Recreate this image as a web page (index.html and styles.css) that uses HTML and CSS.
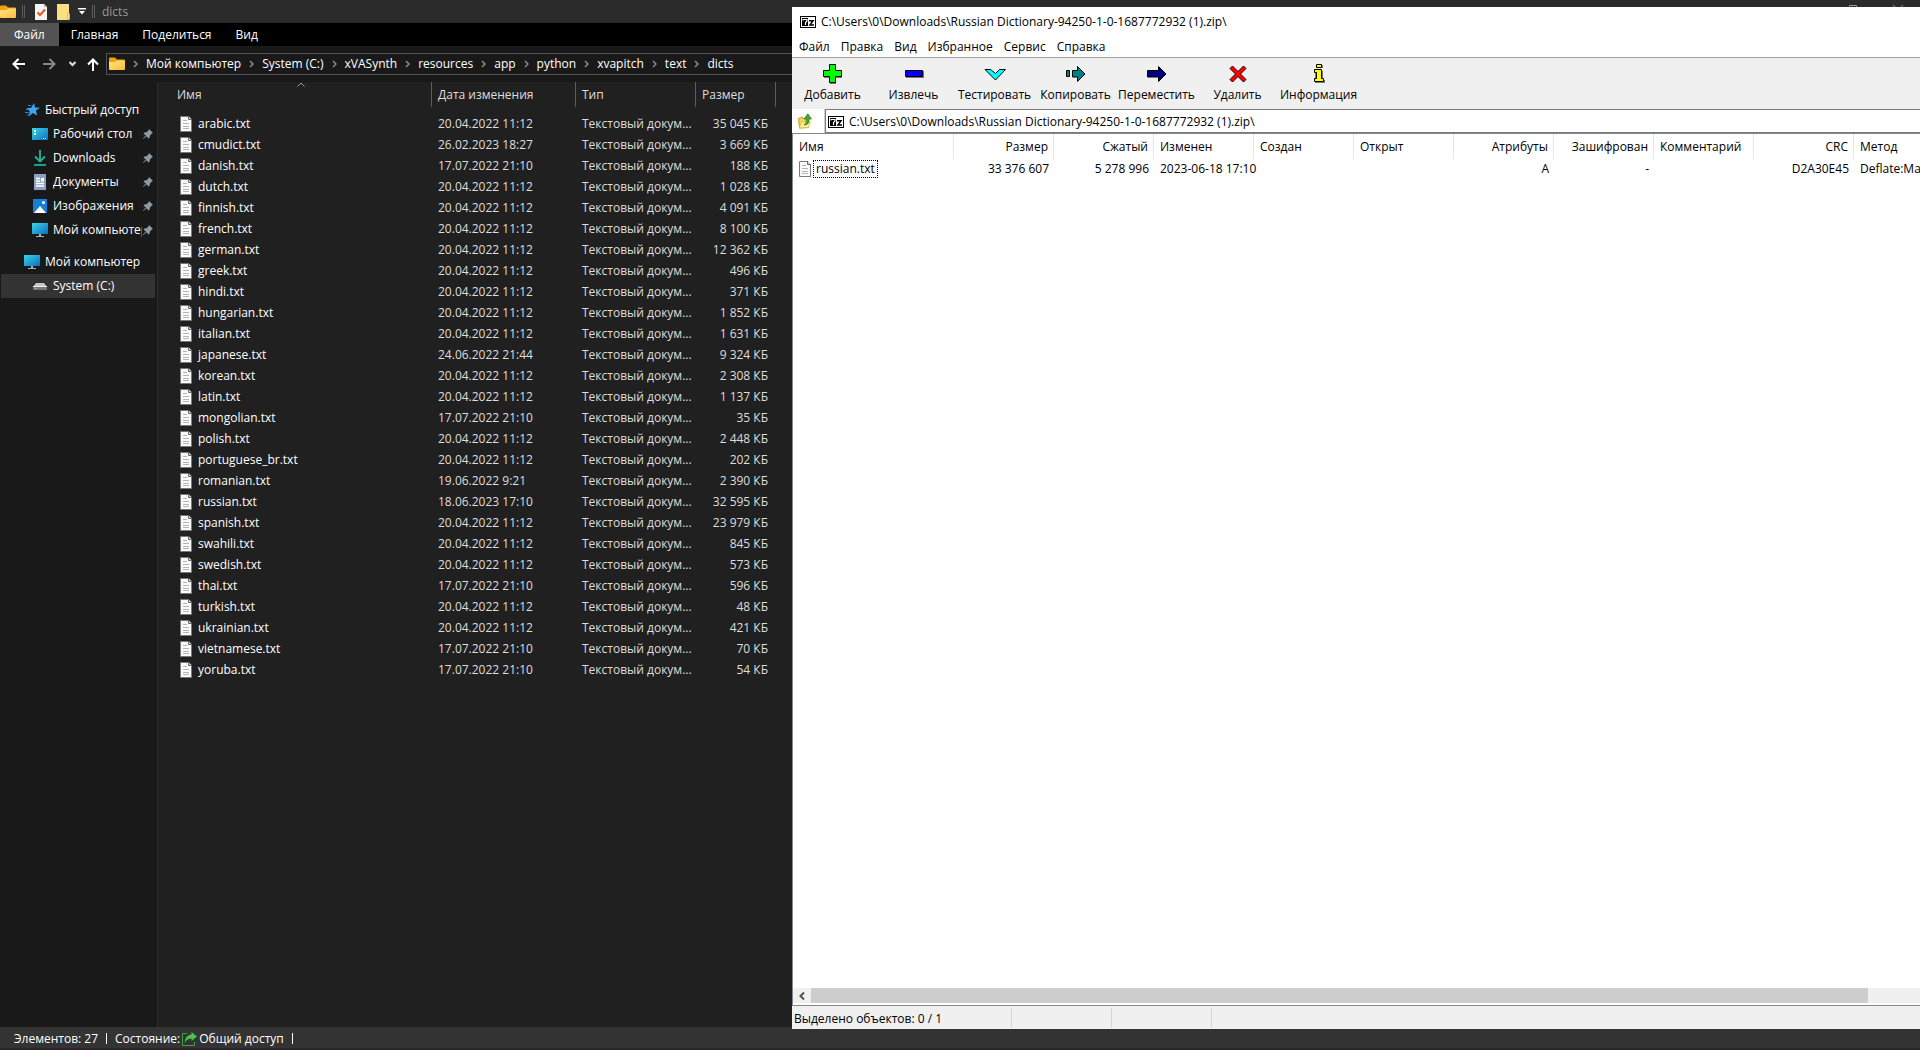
FILE: index.html
```html
<!DOCTYPE html>
<html lang="ru">
  <head>
    <meta charset="UTF-8" />
    <meta name="viewport" content="width=device-width, initial-scale=1.0" />
    <title>dicts</title>
    <link rel="stylesheet" href="styles.css">
  </head>
  <body>
    <!-- Shared icons -->
    <svg class="defs" aria-hidden="true">
      <linearGradient id="gold" x1="0" y1="0" x2="1" y2="1">
        <stop offset="0" stop-color="#ffe48a" />
        <stop offset="1" stop-color="#fcbf33" />
      </linearGradient>
      <linearGradient id="screen" x1="0" y1="0" x2="1" y2="1">
        <stop offset="0" stop-color="#3ad3e6" />
        <stop offset="1" stop-color="#0b6fc4" />
      </linearGradient>
      <symbol id="folder" viewBox="0 0 16 14">
        <path d="M0 1.500Q0 .5 1 .5h5l2 2h7q1 0 1 1V8H0z" fill="#f0a30c" />
        <path d="M0 5h6l2-1.500h8V12q0 1-1 1H1q-1 0-1-1z" fill="url(#gold)" />
      </symbol>
      <symbol id="txt" viewBox="0 0 12 16">
        <path d="M.5.5h8l3 3v12H.5z" fill="#fafafa" stroke="#77797b" />
        <path d="M8.500 0v3.500H12" fill="#ccc" stroke="#66686a" />
        <path d="M3 4.500h4M3 7.500h6M3 10.500h6M3 12.500h6" stroke="#b4b4b4" />
      </symbol>
      <symbol id="pin" viewBox="0 0 10 10">
        <path d="M6 0l4 4-1.200.6-2 2.200-.2 2L5.600 9.600 3.400 7.200.4 10 0 9.600 2.800 6.600.6 4.400l.8-1 2.200-.2L5.600 1.200z" fill="#8f9aa3" />
      </symbol>
      <symbol id="monitor" viewBox="0 0 16 16">
        <path d="M0 1h16v11H0z" fill="url(#screen)" />
        <path d="M7 12h2v2h3v1H4v-1h3z" fill="#a9b4bb" />
      </symbol>
      <symbol id="chevron" viewBox="0 0 5 8">
        <path d="M1 1l3 3-3 3" fill="none" stroke="#8c8c8c" stroke-width="1.500" />
      </symbol>
      <symbol id="sevenzip" viewBox="0 0 16 12">
        <path d="M0 0h16v12H0z" fill="#000" />
        <path d="M1 1h14v10H1z" fill="#fff" />
        <path d="M2 2h6v8H2z" fill="#000" />
        <path d="M3 4.500V3.500h4V5L5.500 6.500V9" fill="none" stroke="#fff" stroke-width="1.200" />
        <path d="M9 4.700h4L10 9h4" fill="none" stroke="#000" stroke-width="1.500" />
      </symbol>
    </svg>

    <div class="explorer">
      <header class="title-bar">
        <svg width="16" height="14"><use href="#folder" /></svg>
        <span class="grip"></span>
        <button class="quick quick-props" aria-label="Свойства">
          <svg width="12" height="16" viewBox="0 0 12 16">
            <path d="M0 0h9l3 3v13H0z" fill="#f4f4f4" />
            <path d="M9 0v3h3z" fill="#b0b0b0" />
            <path d="M2.500 8.500L5 11l5-5.500" fill="none" stroke="#e8552a" stroke-width="2" />
          </svg>
        </button>
        <button class="quick quick-new" aria-label="Новая папка">
          <svg width="13" height="16" viewBox="0 0 13 16">
            <path d="M0 0h12v16H0z" fill="#fbdf83" />
            <path d="M10.500 9.500h2v6h-2z" fill="#fdeaa8" stroke="#dcb343" stroke-width=".8" />
          </svg>
        </button>
        <button class="quick quick-menu" aria-label="Настройка панели">
          <svg width="8" height="7" viewBox="0 0 8 7"><path d="M0 0h8v1.500H0zM1 3h6L4 6.500z" fill="#fff" /></svg>
        </button>
        <span class="grip"></span>
        <span class="window-title">dicts</span>
        <div class="window-controls">
          <button aria-label="Свернуть"><svg width="10" height="10"><path d="M0 5.500h10" stroke="#999" /></svg></button>
          <button aria-label="Развернуть"><svg width="10" height="10"><path d="M1.500.5h7v9h-7z" fill="none" stroke="#999" /></svg></button>
          <button aria-label="Закрыть"><svg width="10" height="10"><path d="M0 0l10 10M10 0L0 10" stroke="#999" /></svg></button>
        </div>
      </header>

      <nav class="ribbon">
        <button class="active">Файл</button>
        <button>Главная</button>
        <button>Поделиться</button>
        <button>Вид</button>
      </nav>

      <div class="nav-row">
        <button aria-label="Назад"><svg width="13" height="12" viewBox="0 0 13 12"><path d="M13 6H1.500M6.500 1l-5 5 5 5" fill="none" stroke="#fff" stroke-width="2" /></svg></button>
        <button class="nav-forward" aria-label="Вперёд"><svg width="13" height="12" viewBox="0 0 13 12"><path d="M0 6h11.500M6.500 1l5 5-5 5" fill="none" stroke="#888" stroke-width="2" /></svg></button>
        <button class="nav-recent" aria-label="Последние"><svg width="7" height="6" viewBox="0 0 7 6"><path d="M.5 1l3 3 3-3" fill="none" stroke="#ddd" stroke-width="2" /></svg></button>
        <button class="nav-up" aria-label="Вверх"><svg width="12" height="13" viewBox="0 0 12 13"><path d="M6 13V1.500M1 6.500l5-5 5 5" fill="none" stroke="#fff" stroke-width="2" /></svg></button>
        <div class="address">
          <svg width="16" height="14"><use href="#folder" /></svg>
          <svg class="crumb-sep" width="5" height="8"><use href="#chevron" /></svg>
          <a href="#">Мой компьютер</a>
          <svg class="crumb-sep" width="5" height="8"><use href="#chevron" /></svg>
          <a href="#">System (C:)</a>
          <svg class="crumb-sep" width="5" height="8"><use href="#chevron" /></svg>
          <a href="#">xVASynth</a>
          <svg class="crumb-sep" width="5" height="8"><use href="#chevron" /></svg>
          <a href="#">resources</a>
          <svg class="crumb-sep" width="5" height="8"><use href="#chevron" /></svg>
          <a href="#">app</a>
          <svg class="crumb-sep" width="5" height="8"><use href="#chevron" /></svg>
          <a href="#">python</a>
          <svg class="crumb-sep" width="5" height="8"><use href="#chevron" /></svg>
          <a href="#">xvapitch</a>
          <svg class="crumb-sep" width="5" height="8"><use href="#chevron" /></svg>
          <a href="#">text</a>
          <svg class="crumb-sep" width="5" height="8"><use href="#chevron" /></svg>
          <a href="#">dicts</a>
        </div>
      </div>

      <div class="content">
        <aside class="sidebar">
          <a class="root" href="#">
            <svg width="16" height="14" viewBox="0 0 16 14">
              <path d="M10 0l1 4.500 5 .3-4 2.800 1 4.900-4.200-2.500L4.800 13.500l1-5L2.500 5.300l4.700-.5z" fill="#3aa5f5" />
              <path d="M4 2.500h3M2 6.500h3M1 9.500h4M3 12h2" stroke="#2a83cf" />
            </svg>
            <span>Быстрый доступ</span>
          </a>
          <a href="#">
            <svg width="16" height="16" viewBox="0 0 16 16">
              <path d="M0 2h16v12H0z" fill="url(#screen)" />
              <path d="M2 4h2v2H2zM2 7h2v2H2zM11 12h1v1h-1zM13 12h1v1h-1z" fill="#fff" />
            </svg>
            <span>Рабочий стол</span>
            <svg class="pin" width="10" height="10"><use href="#pin" /></svg>
          </a>
          <a href="#">
            <svg width="16" height="16" viewBox="0 0 16 16">
              <path d="M8 0v11M3 6.500l5 5 5-5" fill="none" stroke="#20b795" stroke-width="1.800" />
              <path d="M2 14h12v2H2z" fill="#16a085" />
            </svg>
            <span>Downloads</span>
            <svg class="pin" width="10" height="10"><use href="#pin" /></svg>
          </a>
          <a href="#">
            <svg width="16" height="16" viewBox="0 0 16 16">
              <path d="M2 0h12v16H2z" fill="#8ba3c0" />
              <path d="M4 4.500h4M4 7h4M4 9.500h8M4 12h8" stroke="#fff" stroke-width="1.300" />
              <path d="M9 4h3v3.500H9z" fill="#fff" />
            </svg>
            <span>Документы</span>
            <svg class="pin" width="10" height="10"><use href="#pin" /></svg>
          </a>
          <a href="#">
            <svg width="16" height="16" viewBox="0 0 16 16">
              <path d="M1 1h14v14H1z" fill="#1680d8" />
              <path d="M2 15l6-7 6 7z" fill="#fff" />
              <circle cx="11.500" cy="4.500" r="1.500" fill="#fff" />
            </svg>
            <span>Изображения</span>
            <svg class="pin" width="10" height="10"><use href="#pin" /></svg>
          </a>
          <a href="#">
            <svg width="16" height="16"><use href="#monitor" /></svg>
            <span>Мой компьютер</span>
            <svg class="pin" width="10" height="10"><use href="#pin" /></svg>
          </a>
          <a class="root computer" href="#">
            <svg width="16" height="16"><use href="#monitor" /></svg>
            <span>Мой компьютер</span>
          </a>
          <a class="selected" href="#">
            <svg width="16" height="16" viewBox="0 0 16 16">
              <path d="M4 5h8l3 4H1z" fill="#c9c9c9" />
              <path d="M1 8h14v4H1z" fill="#777" />
              <path d="M1 8h14v1H1z" fill="#eee" />
              <path d="M3 10h2v1H3z" fill="#4be04b" />
            </svg>
            <span>System (C:)</span>
          </a>
        </aside>

        <main class="files">
          <table>
            <colgroup>
              <col class="col-name"><col class="col-date"><col class="col-type"><col class="col-size">
            </colgroup>
            <thead>
              <tr>
                <th>Имя<svg class="sort" width="8" height="5" viewBox="0 0 8 5"><path d="M.5 4.500L4 1l3.500 3.500" fill="none" stroke="#999" /></svg></th>
                <th>Дата изменения</th>
                <th>Тип</th>
                <th>Размер</th>
              </tr>
            </thead>
            <tbody>
              <tr><td><svg><use href="#txt" /></svg>arabic.txt</td><td>20.04.2022 11:12</td><td>Текстовый докум...</td><td>35 045 КБ</td></tr>
              <tr><td><svg><use href="#txt" /></svg>cmudict.txt</td><td>26.02.2023 18:27</td><td>Текстовый докум...</td><td>3 669 КБ</td></tr>
              <tr><td><svg><use href="#txt" /></svg>danish.txt</td><td>17.07.2022 21:10</td><td>Текстовый докум...</td><td>188 КБ</td></tr>
              <tr><td><svg><use href="#txt" /></svg>dutch.txt</td><td>20.04.2022 11:12</td><td>Текстовый докум...</td><td>1 028 КБ</td></tr>
              <tr><td><svg><use href="#txt" /></svg>finnish.txt</td><td>20.04.2022 11:12</td><td>Текстовый докум...</td><td>4 091 КБ</td></tr>
              <tr><td><svg><use href="#txt" /></svg>french.txt</td><td>20.04.2022 11:12</td><td>Текстовый докум...</td><td>8 100 КБ</td></tr>
              <tr><td><svg><use href="#txt" /></svg>german.txt</td><td>20.04.2022 11:12</td><td>Текстовый докум...</td><td>12 362 КБ</td></tr>
              <tr><td><svg><use href="#txt" /></svg>greek.txt</td><td>20.04.2022 11:12</td><td>Текстовый докум...</td><td>496 КБ</td></tr>
              <tr><td><svg><use href="#txt" /></svg>hindi.txt</td><td>20.04.2022 11:12</td><td>Текстовый докум...</td><td>371 КБ</td></tr>
              <tr><td><svg><use href="#txt" /></svg>hungarian.txt</td><td>20.04.2022 11:12</td><td>Текстовый докум...</td><td>1 852 КБ</td></tr>
              <tr><td><svg><use href="#txt" /></svg>italian.txt</td><td>20.04.2022 11:12</td><td>Текстовый докум...</td><td>1 631 КБ</td></tr>
              <tr><td><svg><use href="#txt" /></svg>japanese.txt</td><td>24.06.2022 21:44</td><td>Текстовый докум...</td><td>9 324 КБ</td></tr>
              <tr><td><svg><use href="#txt" /></svg>korean.txt</td><td>20.04.2022 11:12</td><td>Текстовый докум...</td><td>2 308 КБ</td></tr>
              <tr><td><svg><use href="#txt" /></svg>latin.txt</td><td>20.04.2022 11:12</td><td>Текстовый докум...</td><td>1 137 КБ</td></tr>
              <tr><td><svg><use href="#txt" /></svg>mongolian.txt</td><td>17.07.2022 21:10</td><td>Текстовый докум...</td><td>35 КБ</td></tr>
              <tr><td><svg><use href="#txt" /></svg>polish.txt</td><td>20.04.2022 11:12</td><td>Текстовый докум...</td><td>2 448 КБ</td></tr>
              <tr><td><svg><use href="#txt" /></svg>portuguese_br.txt</td><td>20.04.2022 11:12</td><td>Текстовый докум...</td><td>202 КБ</td></tr>
              <tr><td><svg><use href="#txt" /></svg>romanian.txt</td><td>19.06.2022 9:21</td><td>Текстовый докум...</td><td>2 390 КБ</td></tr>
              <tr><td><svg><use href="#txt" /></svg>russian.txt</td><td>18.06.2023 17:10</td><td>Текстовый докум...</td><td>32 595 КБ</td></tr>
              <tr><td><svg><use href="#txt" /></svg>spanish.txt</td><td>20.04.2022 11:12</td><td>Текстовый докум...</td><td>23 979 КБ</td></tr>
              <tr><td><svg><use href="#txt" /></svg>swahili.txt</td><td>20.04.2022 11:12</td><td>Текстовый докум...</td><td>845 КБ</td></tr>
              <tr><td><svg><use href="#txt" /></svg>swedish.txt</td><td>20.04.2022 11:12</td><td>Текстовый докум...</td><td>573 КБ</td></tr>
              <tr><td><svg><use href="#txt" /></svg>thai.txt</td><td>17.07.2022 21:10</td><td>Текстовый докум...</td><td>596 КБ</td></tr>
              <tr><td><svg><use href="#txt" /></svg>turkish.txt</td><td>20.04.2022 11:12</td><td>Текстовый докум...</td><td>48 КБ</td></tr>
              <tr><td><svg><use href="#txt" /></svg>ukrainian.txt</td><td>20.04.2022 11:12</td><td>Текстовый докум...</td><td>421 КБ</td></tr>
              <tr><td><svg><use href="#txt" /></svg>vietnamese.txt</td><td>17.07.2022 21:10</td><td>Текстовый докум...</td><td>70 КБ</td></tr>
              <tr><td><svg><use href="#txt" /></svg>yoruba.txt</td><td>17.07.2022 21:10</td><td>Текстовый докум...</td><td>54 КБ</td></tr>
            </tbody>
          </table>
        </main>
      </div>

      <footer class="status">
        <span>Элементов: 27</span>
        <span class="bar"></span>
        <span>Состояние:</span>
        <svg width="15" height="14" viewBox="0 0 15 14">
          <path d="M5 1.500H.5v12h12V10" fill="none" stroke="#35a835" />
          <path d="M9.500 0L15 4.500 9.500 9V6.500Q5 6.500 2.500 11 3 3 9.500 2.500z" fill="#4cc34c" />
        </svg>
        <span>Общий доступ</span>
        <span class="bar"></span>
      </footer>
    </div>

    <div class="archiver">
      <header class="archiver-title">
        <svg width="16" height="12"><use href="#sevenzip" /></svg>
        <span>C:\Users\0\Downloads\Russian Dictionary-94250-1-0-1687772932 (1).zip\</span>
      </header>
      <nav class="menu">
        <button>Файл</button>
        <button>Правка</button>
        <button>Вид</button>
        <button>Избранное</button>
        <button>Сервис</button>
        <button>Справка</button>
      </nav>
      <div class="toolbar">
        <button>
          <svg width="24" height="22" viewBox="0 0 24 22"><path d="M9 3h6v6h6v6h-6v6H9v-6H3V9h6z" fill="#777" /><path d="M8.500 1.500h6v6h6v6h-6v6h-6v-6h-6v-6h6z" fill="#0f0" stroke="#000" /></svg>
          Добавить
        </button>
        <button>
          <svg width="24" height="22" viewBox="0 0 24 22"><path d="M4 8h18v7H4z" fill="#777" /><path d="M3.500 7.500h17v6h-17z" fill="#00f" stroke="#000" /></svg>
          Извлечь
        </button>
        <button>
          <svg width="24" height="22" viewBox="0 0 24 22"><path d="M2 6.500h5.500l5 4 4-4h6L12.500 17z" fill="#0ff" stroke="#000" /></svg>
          Тестировать
        </button>
        <button>
          <svg width="24" height="22" viewBox="0 0 24 22"><path d="M2.500 7.500h3v6h-3zM8.500 7.500h5V3.500l7.500 7.500-7.500 7.500v-4.500h-5z" fill="#008080" stroke="#000" /></svg>
          Копировать
        </button>
        <button>
          <svg width="24" height="22" viewBox="0 0 24 22"><path d="M2.500 7.500h11V3.500L21 11l-7.500 7.500v-4.500h-11z" fill="#000080" stroke="#000" /></svg>
          Переместить
        </button>
        <button>
          <svg width="24" height="22" viewBox="0 0 24 22"><path d="M4 5.500L6.500 3l5.500 5.500L17.500 3 20 5.500 14.500 11l5.500 5.500-2.500 2.500-5.500-5.500L6.500 19 4 16.500 9.500 11z" fill="#f00" stroke="#200" /></svg>
          Удалить
        </button>
        <button>
          <svg width="24" height="22" viewBox="0 0 24 22"><path d="M10 2h6v3h-6zM8 8h8v9h2v3H8z" fill="#777" /><path d="M9.500 1.500h5v3h-5zM7.500 6.500h7v9h2v3h-9v-3h2v-6h-2z" fill="#ff0" stroke="#000" /></svg>
          Информация
        </button>
      </div>
      <div class="path-row">
        <button class="up-button" aria-label="На уровень вверх">
          <svg width="14" height="16" viewBox="0 0 14 16">
            <path d="M.5 5.500L4 4l1 1.500h5.500v9L1.500 15z" fill="#f6d25e" stroke="#c99a1e" />
            <path d="M1 15l3-6h8.500L10.500 14.500z" fill="#fdeea6" stroke="#d9b23a" stroke-width=".7" />
            <path d="M6 12q3-1 2.500-6H6L9.800.8 13.500 6H11q.5 6-5 6z" fill="#3fae2a" stroke="#23761a" stroke-width=".7" />
          </svg>
        </button>
        <label class="path-box">
          <svg width="16" height="12"><use href="#sevenzip" /></svg>
          <input type="text" aria-label="Путь" value="C:\Users\0\Downloads\Russian Dictionary-94250-1-0-1687772932 (1).zip\">
        </label>
      </div>
      <div class="list">
        <table>
          <thead>
            <tr>
              <th class="col-wide">Имя</th>
              <th class="num">Размер</th>
              <th class="num">Сжатый</th>
              <th>Изменен</th>
              <th>Создан</th>
              <th>Открыт</th>
              <th class="num">Атрибуты</th>
              <th class="num">Зашифрован</th>
              <th>Комментарий</th>
              <th class="num">CRC</th>
              <th>Метод</th>
            </tr>
          </thead>
          <tbody>
            <tr>
              <td class="entry"><svg><use href="#txt" /></svg><span class="focused">russian.txt</span></td>
              <td class="num">33 376 607</td>
              <td class="num">5 278 996</td>
              <td>2023-06-18 17:10</td>
              <td></td>
              <td></td>
              <td class="num">A</td>
              <td class="num">-</td>
              <td></td>
              <td class="num">D2A30E45</td>
              <td>Deflate:Max</td>
            </tr>
          </tbody>
        </table>
        <div class="scrollbar">
          <button aria-label="Влево"><svg width="6" height="8" viewBox="0 0 6 8"><path d="M5 .5L1.500 4 5 7.500" fill="none" stroke="#505050" stroke-width="2" /></svg></button>
          <div class="thumb"></div>
        </div>
      </div>
      <footer class="archiver-status">
        <span class="wide">Выделено объектов: 0 / 1</span>
        <span></span>
        <span></span>
      </footer>
    </div>
  </body>
</html>
```

FILE: styles.css
```css
* {
  box-sizing: border-box;
}

body {
  margin: 0;
  height: 100vh;
  position: relative;
  overflow: hidden;
  background: #2b2428;
  font: 12px/16px "Open Sans", "Noto Sans", sans-serif;
  color: #fff;
}

button,
input {
  margin: 0;
  padding: 0;
  border: none;
  background: none;
  font: inherit;
  color: inherit;
}

a {
  color: inherit;
  text-decoration: none;
}

svg {
  display: block;
  flex: none;
}

table {
  border-collapse: separate;
  border-spacing: 0;
  table-layout: fixed;
}

th,
td {
  padding: 0 6px;
  text-align: left;
  font-weight: normal;
  white-space: nowrap;
}

.defs {
  position: absolute;
  width: 0;
  height: 0;
}

/* Explorer window */
.explorer {
  display: flex;
  flex-direction: column;
  height: 100vh;
  padding-bottom: 2px;
}

.title-bar {
  display: flex;
  align-items: center;
  height: 23px;
  background: #2b2b2b;
}

.grip {
  width: 3px;
  height: 13px;
  margin: 0 7px 0 6px;
  border: solid #5c5c5c;
  border-width: 0 1px;
}

.quick-props {
  margin: 0 10px 0 3px;
}

.quick-new {
  margin-right: 8px;
}

.window-title {
  color: #999;
}

.window-controls {
  display: flex;
  align-self: flex-start;
  margin-left: auto;
}

.window-controls button {
  display: flex;
  align-items: center;
  justify-content: center;
  width: 45px;
  height: 20px;
}

.ribbon {
  display: flex;
  height: 23px;
  background: #000;
}

.ribbon button {
  padding: 0 12px;
}

.ribbon .active {
  padding: 0 14px;
  background: #535353;
}

.nav-row {
  display: flex;
  align-items: center;
  height: 36px;
  padding-left: 12px;
  background: #191919;
}

.nav-forward {
  margin-left: 18px;
}

.nav-recent {
  margin-left: 13px;
}

.nav-up {
  margin: 0 7px 0 11px;
}

.address {
  display: flex;
  flex: 1;
  align-items: center;
  height: 22px;
  padding-left: 2px;
  border: 1px solid #535353;
  border-right: none;
}

.crumb-sep {
  margin: 0 8px;
}

.content {
  display: flex;
  flex: 1;
}

.sidebar {
  width: 158px;
  padding: 16px 2px 0 1px;
  border-right: 1px solid #2d2d2d;
  background: #191919;
}

.sidebar a {
  display: flex;
  align-items: center;
  gap: 5px;
  height: 24px;
  padding: 0 2px 0 31px;
}

.sidebar .root {
  padding-left: 23px;
}

.sidebar span {
  flex: 1;
  overflow: hidden;
  white-space: nowrap;
}

.sidebar .pin {
  margin-left: -4px;
}

.sidebar .computer {
  margin-top: 8px;
}

.sidebar .selected {
  background: #333;
}

.files {
  flex: 1;
  background: #202020;
}

.files table {
  width: 618px;
}

.col-name {
  width: 274px;
}

.col-date {
  width: 144px;
}

.col-type {
  width: 120px;
}

.col-size {
  width: 80px;
}

.files th {
  position: relative;
  height: 25px;
  border-right: 1px solid #5c5c5c;
  color: #dedede;
}

.files th:first-child {
  padding-left: 19px;
}

.files tbody::before {
  content: "";
  display: block;
  height: 6px;
}

.sort {
  position: absolute;
  top: 0;
  left: 139px;
}

.files td {
  height: 21px;
  color: #dedede;
}

.files td:first-child {
  padding-left: 22px;
  color: #fff;
}

.files td:last-child {
  padding-right: 8px;
  text-align: right;
}

td svg {
  display: inline-block;
  width: 12px;
  height: 16px;
  margin-right: 6px;
  vertical-align: top;
}

.status {
  display: flex;
  align-items: center;
  height: 21px;
  padding: 2px 0 0 14px;
  background: #333;
}

.status .bar {
  width: 1px;
  height: 11px;
  margin: 0 8px;
  background: #fff;
}

.status svg {
  margin: 0 2px;
}

/* 7-Zip window on top of the explorer */
.archiver {
  position: absolute;
  top: 7px;
  right: 0;
  bottom: 21px;
  left: 792px;
  display: flex;
  flex-direction: column;
  background: #fff;
  color: #000;
}

.archiver-title {
  display: flex;
  align-items: center;
  gap: 5px;
  height: 30px;
  padding-left: 8px;
}

.menu {
  display: flex;
  gap: 11px;
  height: 20px;
  padding-left: 7px;
}

.toolbar {
  display: flex;
  height: 52px;
  border-top: 1px solid #a0a0a0;
  background: #f0f0f0;
}

.toolbar button {
  display: flex;
  flex-direction: column;
  align-items: center;
  gap: 2px;
  width: 81px;
  padding-top: 5px;
}

.path-row {
  display: flex;
  height: 24px;
}

.up-button {
  width: 33px;
  padding-left: 6px;
  border-right: 1px solid #d0d0d0;
}

.path-box {
  display: flex;
  flex: 1;
  align-items: center;
  gap: 5px;
  padding: 2px 0 0 2px;
  border: 1px solid #7a7a7a;
  border-right: none;
}

.path-box input {
  flex: 1;
  outline: none;
}

.list {
  display: flex;
  flex: 1;
  flex-direction: column;
  overflow: hidden;
  border: solid #828790;
  border-width: 1px 0 1px 1px;
}

.list table {
  width: 1161px;
}

.list th {
  width: 100px;
  height: 25px;
  border-right: 1px solid #e5e5e5;
}

.list .col-wide {
  width: 161px;
}

.list .num {
  padding-right: 5px;
  text-align: right;
}

.list td {
  height: 20px;
}

.list .entry svg {
  margin-right: 3px;
}

.focused {
  display: inline-block;
  padding: 0 2px;
  outline: 1px dotted #000;
}

.scrollbar {
  display: flex;
  height: 15px;
  margin-top: auto;
  margin-bottom: 2px;
  padding-right: 52px;
  background: #f0f0f0;
}

.scrollbar button {
  width: 18px;
  padding-left: 6px;
}

.thumb {
  flex: 1;
  background: #cdcdcd;
}

.archiver-status {
  display: flex;
  height: 23px;
  padding: 2px 0 1px;
  background: #f0f0f0;
}

.archiver-status span {
  width: 100px;
  padding: 3px 2px 0;
  border-right: 1px solid #d7d7d7;
}

.archiver-status .wide {
  width: 220px;
}
```
